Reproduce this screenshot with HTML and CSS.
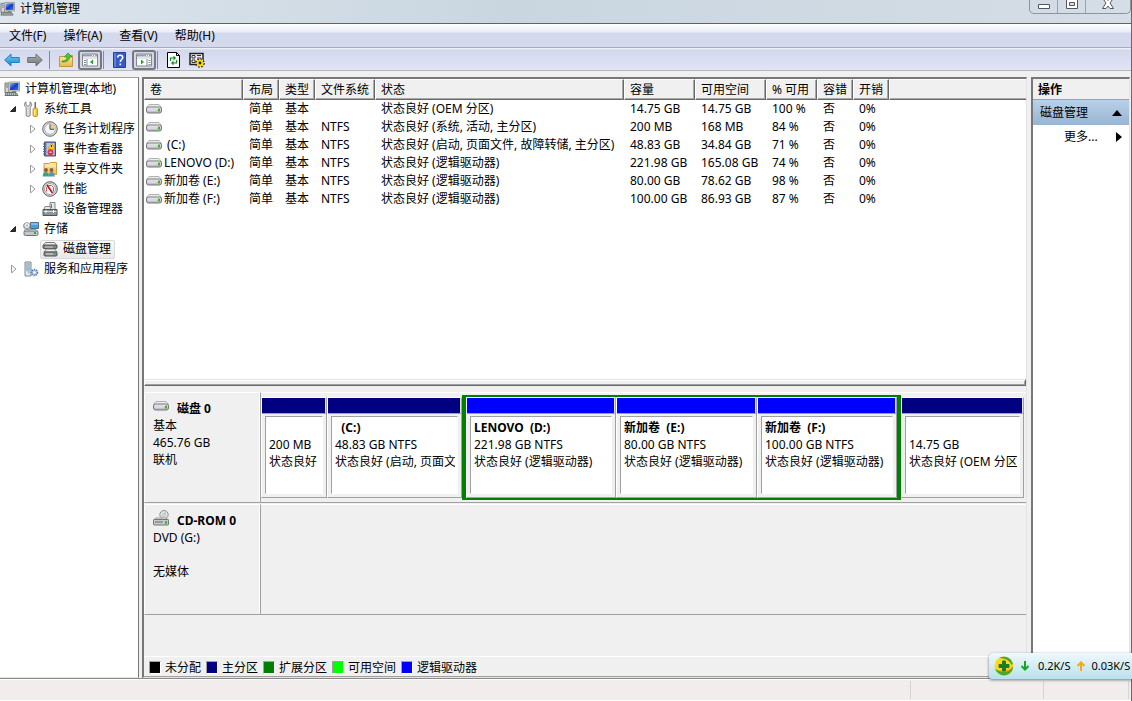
FILE: index.html
```html
<!DOCTYPE html>
<html lang="zh-CN">
<head>
<meta charset="utf-8">
<title>计算机管理</title>
<link rel="stylesheet" href="styles.css">
</head>
<body>
<svg class="defs" aria-hidden="true">
  <defs>
    <linearGradient id="gBlue" x2="0" y2="1"><stop offset="0" stop-color="#6fd0f8"/><stop offset="1" stop-color="#1583cf"/></linearGradient>
    <linearGradient id="gGray" x2="0" y2="1"><stop offset="0" stop-color="#b5b5b5"/><stop offset="1" stop-color="#6f6f6f"/></linearGradient>
    <linearGradient id="gMetal" x2="0" y2="1"><stop offset="0" stop-color="#f4f4f4"/><stop offset="1" stop-color="#b0b0b6"/></linearGradient>
    <linearGradient id="gFolder" x2="0" y2="1"><stop offset="0" stop-color="#fdeaa8"/><stop offset="1" stop-color="#e8b94e"/></linearGradient>
    <linearGradient id="gScreen" x2="1" y2="1"><stop offset="0" stop-color="#8fb7f7"/><stop offset=".5" stop-color="#1c37c4"/><stop offset="1" stop-color="#2d7ae8"/></linearGradient>
    <symbol id="computer" viewBox="0 0 16 16">
      <path d="M1 2h4v10H1z" fill="#d5d5d5" stroke="#777"/><path d="M2 4h2M2 6h2" stroke="#777"/>
      <path d="M5 1h10.500v9H5z" fill="#e4e4e4" stroke="#9c9c9c"/><path d="M6 2h8.500v7H6z" fill="url(#gScreen)"/>
      <path d="M8 10h4v2H8z" fill="#888"/><path d="M2 11.500h10l2 3H1z" fill="#b8bfc2" stroke="#6a7074"/><path d="M3 13h9" stroke="#555" stroke-dasharray="1 1"/>
    </symbol>
    <symbol id="drive" viewBox="0 0 16 16">
      <path d="M3 3.500h10l2.500 3H.5z" fill="#ececee" stroke="#b0b0b4"/>
      <rect x=".5" y="6" width="15" height="6" rx="2" fill="url(#gMetal)" stroke="#77777b"/>
      <path d="M2 8h8M2 9.500h8" stroke="#d9d9e8"/><path d="M12 7.500h2v3h-2z" fill="#3fb51f"/>
    </symbol>
    <symbol id="tools" viewBox="0 0 16 16">
      <path d="M3 .8v3l2 1.500 2-1.500v-3c2 1 2.300 4 .2 5.500V14c0 2-4 2-4 0V6.500C.8 5 1 2 3 .8z" fill="#dedede" stroke="#777" stroke-width=".9"/>
      <path d="M11.500 1h1.500v7h-1.500z" fill="#6c6c6c"/><rect x="10" y="7" width="4.500" height="8.500" rx="1.500" fill="#ffc928" stroke="#b98400" stroke-width=".8"/><path d="M11.500 9v5" stroke="#fff2a3"/>
    </symbol>
    <symbol id="clock" viewBox="0 0 16 16">
      <circle cx="8" cy="8" r="7.300" fill="#d4d4d4" stroke="#707070"/><circle cx="8" cy="8" r="5.300" fill="#f3f8ff" stroke="#aaa" stroke-width=".8"/>
      <path d="M8 3a5 5 0 0 1 5 5H8z" fill="#f1c988"/><path d="M8 3.500V8.300h4" fill="none" stroke="#3c4d60"/>
    </symbol>
    <symbol id="events" viewBox="0 0 16 16">
      <path d="M2.500 1h11v14h-11z" fill="#6f84b4" stroke="#3d5280"/><path d="M4.500 2h8v12h-8z" fill="#b9c9e2"/><path d="M1 3h3M1 5.500h3M1 8h3M1 10.500h3M1 13h3" stroke="#666"/>
      <path d="M9.500 2l3.700 6H6z" fill="#ffd02e" stroke="#a98100" stroke-width=".5"/><path d="M9.500 4v2" stroke="#222"/><circle cx="8.500" cy="11.200" r="2.900" fill="#d8343d"/><path d="M7.200 11.200h2.600" stroke="#fff"/>
    </symbol>
    <symbol id="shared" viewBox="0 0 16 16">
      <path d="M2 2.500h5l1-1h6.500v12H2z" fill="url(#gFolder)" stroke="#cba342"/><path d="M3 5h11" stroke="#fff2bf"/>
      <circle cx="4" cy="9" r="1.900" fill="#8a5b38"/><circle cx="9.500" cy="9" r="1.900" fill="#8a5b38"/>
      <path d="M.7 15.500c0-6 6.200-6 6.200 0z" fill="#32a584"/><path d="M6.500 15.500c0-6 6.200-6 6.200 0z" fill="#4e92ca"/>
    </symbol>
    <symbol id="gauge" viewBox="0 0 16 16">
      <circle cx="8" cy="8" r="7.300" fill="#d6d6d6" stroke="#606060"/><circle cx="8" cy="8" r="5.400" fill="#fff" stroke="#888" stroke-width=".7"/>
      <path d="M4.500 10.500V6.500l2-2h3l2 2v4" fill="none" stroke="#c95a5e"/><path d="M5 4l5.500 8" stroke="#d20f16" stroke-width="1.800"/>
    </symbol>
    <symbol id="devices" viewBox="0 0 16 16">
      <path d="M8 1.500h5v7H8z" fill="#e6e9ea" stroke="#808688"/><path d="M9.500 3v4" stroke="#3ea144"/><path d="M3 5.500h5l1 3H2z" fill="#e8e8e8" stroke="#888"/>
      <path d="M1 8.500h14v6H1z" fill="#8c9499" stroke="#4d565b"/><path d="M1.500 10.500h13" stroke="#d4d9dc"/><path d="M4 9v3M11.500 9v3" stroke="#fff"/>
    </symbol>
    <symbol id="storage" viewBox="0 0 16 16">
      <path d="M1 3h5l1 4H1z" fill="#ddd" stroke="#777"/><path d="M7.500 1.500h8v6h-8z" fill="#3aa4e5" stroke="#547086"/><path d="M8 3h7" stroke="#a9e1ff"/>
      <circle cx="4" cy="4.500" r="3" fill="#eceef0" stroke="#888" stroke-width=".7"/><circle cx="4" cy="4.500" r="1" fill="#aaa"/><path d="M2 8.500h11l2 2H1z" fill="#f4f4f4" stroke="#999"/><rect x="1" y="10" width="14" height="4.500" rx="1.500" fill="#c3c7cb" stroke="#6d7176"/><path d="M11 12h2" stroke="#29b823" stroke-width="2"/>
    </symbol>
    <symbol id="disks" viewBox="0 0 16 16">
      <path d="M3.500 1.500h9l2.500 3H1z" fill="#ededed" stroke="#777"/><rect x="1" y="4" width="14" height="3.500" rx="1" fill="#777d82" stroke="#555"/>
      <path d="M4.500 8h8l2.500 3H2z" fill="#f1f1f1" stroke="#777"/><rect x="2" y="11" width="13" height="4" rx="1" fill="#8b9094" stroke="#4d5256"/><path d="M4 13h7M3 6h8" stroke="#dadada"/><path d="M12 6h2M12 13h2" stroke="#31c63a"/>
    </symbol>
    <symbol id="services" viewBox="0 0 16 16">
      <path d="M2 1h6v14H2z" fill="#dfe7ec" stroke="#7c8b95"/><path d="M3 3h4M3 5h4M3 7h4M3 9h2" stroke="#6f91a9"/>
      <circle cx="7" cy="10" r="2" fill="#aecbe5" stroke="#648db0" stroke-dasharray="1 1"/><circle cx="11.500" cy="11.500" r="3" fill="#a5c3df" stroke="#54789b" stroke-width="1.500" stroke-dasharray="1.200 1"/><circle cx="11.500" cy="11.500" r="1.200" fill="#fff"/>
    </symbol>
    <symbol id="cdrom" viewBox="0 0 16 16">
      <circle cx="11" cy="4.700" r="4.200" fill="#e0e0e4" stroke="#929298"/><path d="M11 5l2-3.500M11 5l-2 3" stroke="#a6cba6"/><circle cx="11" cy="5" r="1.300" fill="#fff" stroke="#999" stroke-width=".6"/>
      <path d="M3 8h10l2.500 2H.5z" fill="#eee" stroke="#999"/><rect x=".5" y="9.500" width="15" height="5.500" rx="1" fill="#c9cacc" stroke="#737579"/><path d="M2 12h8" stroke="#66686b"/><path d="M12 12.500h2" stroke="#32bd23" stroke-width="3"/>
    </symbol>
    <symbol id="open" viewBox="0 0 8 8"><path d="M6.500 1.500v5h-5z" fill="#333" stroke="#222"/></symbol>
    <symbol id="closed" viewBox="0 0 8 8"><path d="M2.500 0l4.500 4-4.500 4z" fill="#fff" stroke="#9a9a9a"/></symbol>
    <symbol id="panel" viewBox="0 0 18 16">
      <path d="M1.500 2h15v12h-15z" fill="#fff" stroke="#808894"/><path d="M2 3.500h14" stroke="#8e9cb4" stroke-width="2"/><path d="M11 3.500h1M13 3.500h1" stroke="#fff"/><path d="M2 6h14" stroke="#c5cad3"/>
    </symbol>
  </defs>
</svg>
<div class="window">
  <header class="titlebar">
    <div class="caption"><svg class="icon"><use href="#computer"/></svg><span>计算机管理</span></div>
    <div class="controls">
      <button class="control" aria-label="最小化"><svg width="14" height="12" viewBox="0 0 14 12"><path d="M1.500 4.500h11v4h-11z" fill="#fff" stroke="#535666"/></svg></button>
      <button class="control" aria-label="最大化"><svg width="14" height="12" viewBox="0 0 14 12"><path d="M1.500-3h11V8.500h-11z" fill="#fff" stroke="#535666"/><path d="M4.500 2.500h5v3h-5z" fill="#d5dce8" stroke="#535666"/></svg></button>
      <button class="control close" aria-label="关闭"><svg width="14" height="12" viewBox="0 0 14 12"><path d="M1.500-2h3.500l2 2.500L9-2h3.500L9 3l3.500 5.500H9L7 6 5 8.500H1.500L5 3z" fill="#fff" stroke="#535666"/></svg></button>
    </div>
  </header>
  <nav class="menubar">
    <button>文件(F)</button><button>操作(A)</button><button>查看(V)</button><button>帮助(H)</button>
  </nav>
  <div class="toolbar">
    <button class="tool" aria-label="后退"><svg class="icon" viewBox="0 0 16 16"><path d="M.7 8L7 2v3.500h8.300v5H7V14z" fill="url(#gBlue)" stroke="#2a7fc0"/></svg></button>
    <button class="tool" aria-label="前进"><svg class="icon" viewBox="0 0 16 16"><path d="M15.300 8L9 2v3.500H.7v5H9V14z" fill="url(#gGray)" stroke="#6f7377"/></svg></button>
    <span class="separator"></span>
    <button class="tool" aria-label="上一级"><svg class="icon" viewBox="0 0 16 16"><path d="M1.500 4.500h5l1-1h7v11h-13z" fill="url(#gFolder)" stroke="#c49640"/><path d="M4 9c4 0 5-2 5-4H6.500L10 1l4 4h-2.500c0 4-3 5-7.500 5z" fill="#55c431" stroke="#2b8e1a" stroke-width=".7"/></svg></button>
    <button class="tool pressed" aria-label="显示控制台树" aria-pressed="true"><svg width="18" height="16"><use href="#panel"/><path d="M6 7v7M3 8.500h2M3 10.500h2M3 12.500h2" stroke="#7889a4"/><path d="M12 7.500v5L9 10z" fill="#24a423"/></svg></button>
    <span class="separator"></span>
    <button class="tool" aria-label="帮助"><svg class="icon" viewBox="0 0 16 16"><path d="M1.500.5h12v15h-12z" fill="#365bc4" stroke="#2340a0"/><path d="M3 1v14" stroke="#88a6ef"/><path d="M5.700 5.500c0-3 5-3 5 0 0 2-2.400 2-2.400 4.500M8.300 11.500v1.700" fill="none" stroke="#fff" stroke-width="1.600"/></svg></button>
    <button class="tool pressed" aria-label="显示操作窗格" aria-pressed="true"><svg width="18" height="16"><use href="#panel"/><path d="M12 7v7M13.500 8.500h2M13.500 10.500h2M13.500 12.500h2" stroke="#7889a4"/><path d="M6 7.500v5l3-2.500z" fill="#24a423"/></svg></button>
    <span class="separator"></span>
    <button class="tool" aria-label="刷新"><svg class="icon" viewBox="0 0 16 16"><path d="M1.500.5h9l3 3v12h-12z" fill="#fff" stroke="#000"/><path d="M10.500.5v3h3" fill="none" stroke="#000"/><path d="M4.500 9V6h4" fill="none" stroke="#118b22" stroke-width="1.200"/><path d="M7.500 3.500v5L10 6z" fill="#118b22"/><path d="M10.500 8v3h-4" fill="none" stroke="#118b22" stroke-width="1.200"/><path d="M7.500 8.500v5L5 11z" fill="#118b22"/></svg></button>
    <button class="tool" aria-label="属性"><svg class="icon" viewBox="0 0 16 16"><path d="M1 1.500h13v11H1z" fill="#eee" stroke="#222" stroke-width="1.500"/><path d="M3 3.500h3v2.500H3zM3 8h3v2.500H3z" fill="#fff" stroke="#333"/><path d="M8 3.500h4M8 6h4" stroke="#333"/><circle cx="11" cy="11" r="4" fill="#f4dc19" stroke="#222" stroke-width="1.500" stroke-dasharray="1.700 1.400"/><path d="M11 7v8M7 11h8M8 8l6 6M14 8l-6 6" stroke="#f4dc19" stroke-width="1.200"/><circle cx="11" cy="11" r="1.400" fill="#222"/></svg></button>
  </div>
  <main class="workspace">
    <ul class="tree">
      <li class="node root"><svg class="icon"><use href="#computer"/></svg><span class="label">计算机管理(本地)</span></li>
      <li class="node"><svg class="twist"><use href="#open"/></svg><svg class="icon"><use href="#tools"/></svg><span class="label">系统工具</span></li>
      <li class="node child"><svg class="twist"><use href="#closed"/></svg><svg class="icon"><use href="#clock"/></svg><span class="label">任务计划程序</span></li>
      <li class="node child"><svg class="twist"><use href="#closed"/></svg><svg class="icon"><use href="#events"/></svg><span class="label">事件查看器</span></li>
      <li class="node child"><svg class="twist"><use href="#closed"/></svg><svg class="icon"><use href="#shared"/></svg><span class="label">共享文件夹</span></li>
      <li class="node child"><svg class="twist"><use href="#closed"/></svg><svg class="icon"><use href="#gauge"/></svg><span class="label">性能</span></li>
      <li class="node child"><span class="twist"></span><svg class="icon"><use href="#devices"/></svg><span class="label">设备管理器</span></li>
      <li class="node"><svg class="twist"><use href="#open"/></svg><svg class="icon"><use href="#storage"/></svg><span class="label">存储</span></li>
      <li class="node child"><span class="twist"></span><span class="selected"><svg class="icon"><use href="#disks"/></svg><span class="label">磁盘管理</span></span></li>
      <li class="node"><svg class="twist"><use href="#closed"/></svg><svg class="icon"><use href="#services"/></svg><span class="label">服务和应用程序</span></li>
    </ul>
    <section class="center">
      <div class="list">
        <table class="volumes">
          <colgroup><col class="c-name"><col class="c-short"><col class="c-short"><col class="c-fs"><col class="c-state"><col class="c-size"><col class="c-size"><col class="c-free"><col class="c-short"><col class="c-short"><col></colgroup>
          <thead><tr><th>卷</th><th>布局</th><th>类型</th><th>文件系统</th><th>状态</th><th>容量</th><th>可用空间</th><th>% 可用</th><th>容错</th><th>开销</th><th class="rest"></th></tr></thead>
          <tbody>
            <tr><td><span class="volume"><svg class="icon"><use href="#drive"/></svg></span></td><td>简单</td><td>基本</td><td></td><td>状态良好 (OEM 分区)</td><td>14.75 GB</td><td>14.75 GB</td><td>100 %</td><td>否</td><td>0%</td><td></td></tr>
            <tr><td><span class="volume"><svg class="icon"><use href="#drive"/></svg></span></td><td>简单</td><td>基本</td><td>NTFS</td><td>状态良好 (系统, 活动, 主分区)</td><td>200 MB</td><td>168 MB</td><td>84 %</td><td>否</td><td>0%</td><td></td></tr>
            <tr><td><span class="volume"><svg class="icon"><use href="#drive"/></svg>&nbsp;(C:)</span></td><td>简单</td><td>基本</td><td>NTFS</td><td>状态良好 (启动, 页面文件, 故障转储, 主分区)</td><td>48.83 GB</td><td>34.84 GB</td><td>71 %</td><td>否</td><td>0%</td><td></td></tr>
            <tr><td><span class="volume"><svg class="icon"><use href="#drive"/></svg>LENOVO (D:)</span></td><td>简单</td><td>基本</td><td>NTFS</td><td>状态良好 (逻辑驱动器)</td><td>221.98 GB</td><td>165.08 GB</td><td>74 %</td><td>否</td><td>0%</td><td></td></tr>
            <tr><td><span class="volume"><svg class="icon"><use href="#drive"/></svg>新加卷 (E:)</span></td><td>简单</td><td>基本</td><td>NTFS</td><td>状态良好 (逻辑驱动器)</td><td>80.00 GB</td><td>78.62 GB</td><td>98 %</td><td>否</td><td>0%</td><td></td></tr>
            <tr><td><span class="volume"><svg class="icon"><use href="#drive"/></svg>新加卷 (F:)</span></td><td>简单</td><td>基本</td><td>NTFS</td><td>状态良好 (逻辑驱动器)</td><td>100.00 GB</td><td>86.93 GB</td><td>87 %</td><td>否</td><td>0%</td><td></td></tr>
          </tbody>
        </table>
      </div>
      <div class="splitter"></div>
      <div class="disks">
        <div class="disk">
          <div class="disk-info"><h2><svg class="icon"><use href="#drive"/></svg>磁盘 0</h2><p>基本</p><p>465.76 GB</p><p>联机</p></div>
          <div class="partitions">
            <div class="part"><div class="bar"></div><div class="box"><b></b><p>200 MB</p><p>状态良好</p></div></div>
            <div class="part"><div class="bar"></div><div class="box"><b>&nbsp; (C:)</b><p>48.83 GB NTFS</p><p>状态良好 (启动, 页面文件</p></div></div>
            <div class="extended">
              <div class="part logical"><div class="bar"></div><div class="box"><b>LENOVO &nbsp;(D:)</b><p>221.98 GB NTFS</p><p>状态良好 (逻辑驱动器)</p></div></div>
              <div class="part logical"><div class="bar"></div><div class="box"><b>新加卷 &nbsp;(E:)</b><p>80.00 GB NTFS</p><p>状态良好 (逻辑驱动器)</p></div></div>
              <div class="part logical"><div class="bar"></div><div class="box"><b>新加卷 &nbsp;(F:)</b><p>100.00 GB NTFS</p><p>状态良好 (逻辑驱动器)</p></div></div>
            </div>
            <div class="part"><div class="bar"></div><div class="box"><b></b><p>14.75 GB</p><p>状态良好 (OEM 分区)</p></div></div>
          </div>
        </div>
        <div class="disk">
          <div class="disk-info"><h2><svg class="icon"><use href="#cdrom"/></svg>CD-ROM 0</h2><p>DVD (G:)</p><p>&nbsp;</p><p>无媒体</p></div>
          <div class="partitions"></div>
        </div>
      </div>
      <ul class="legend">
        <li><i class="swatch free-raw"></i>未分配</li><li><i class="swatch primary"></i>主分区</li><li><i class="swatch ext"></i>扩展分区</li><li><i class="swatch avail"></i>可用空间</li><li><i class="swatch logic"></i>逻辑驱动器</li>
      </ul>
    </section>
    <aside class="actions">
      <h2 class="actions-title">操作</h2>
      <button class="action-group"><span>磁盘管理</span><svg width="10" height="6"><path d="M0 6l5-6 5 6z"/></svg></button>
      <button class="action-more"><span>更多...</span><svg width="6" height="10"><path d="M0 0l6 5-6 5z"/></svg></button>
    </aside>
  </main>
  <footer class="statusbar"><span class="status-main"></span><span class="status-mid"></span><span class="status-end"></span></footer>
  <div class="speed">
    <svg width="20" height="20" viewBox="0 0 20 20"><circle cx="10" cy="10" r="9.500" fill="#ffd91d"/><path d="M5 2C10-1 17 1 19 8c-1 1-2 1-2 0C15 4 10 2 5 2z" fill="#4da52d"/><path d="M1 13c3 6 9 8 14 5 3-2 4-5 4-8-3 5-8 8-18 3z" fill="#4da52d"/><path d="M3 13c5 2 10 2 15-2-1 4-8 7-15 2z" fill="#ffa914"/><path d="M8.500 5h3v3.500H15v3h-3.500V15h-3v-3.500H5v-3h3.500z" fill="#197d28" stroke="#197d28" stroke-linejoin="round"/></svg>
    <svg class="down" width="8" height="10"><path d="M4 0v9M.5 5L4 8.500 7.500 5" fill="none" stroke="#18a725" stroke-width="2"/></svg><span class="rate">0.2K/S</span>
    <svg class="up" width="8" height="10"><path d="M4 10V1M.5 5L4 1.500 7.500 5" fill="none" stroke="#f5a916" stroke-width="2"/></svg><span>0.03K/S</span>
  </div>
</div>
</body>
</html>
```
FILE: styles.css
```css
* { box-sizing: border-box; }
body { margin: 0; color: #000; font: 12px/18px "Noto Sans", "Noto Sans CJK SC", sans-serif; }
button { margin: 0; padding: 0; border: 0; background: none; color: inherit; font: inherit; }
h2, p, ul { margin: 0; padding: 0; }
h2 { font-size: 12px; line-height: 17px; }
ul { list-style: none; }
svg { display: block; flex: none; }
.defs { position: absolute; width: 0; height: 0; }
.icon { width: 16px; height: 16px; }

.window { position: relative; display: flex; flex-direction: column; min-height: 100vh; background: #f0f0f0; border-right: 1px solid #696969; }

.titlebar { display: flex; justify-content: space-between; height: 24px; background: linear-gradient(90deg, #dde5ed, #c9d6e0 45%, #d5dde6); border-bottom: 1px solid #5f6368; }
.caption { display: flex; align-items: flex-start; gap: 5px; }
.caption .icon { margin-top: 1px; width: 15px; }
.controls { display: flex; height: 14px; border: 1px solid #8d949e; border-top: 0; border-radius: 0 0 5px 5px; }
.control { display: flex; justify-content: center; width: 28px; border-right: 1px solid #9aa2ac; }
.control.close { width: 44px; border-right: 0; }

.menubar { display: flex; gap: 17px; height: 24px; padding: 2px 9px 0; background: linear-gradient(#fff, #e9edf6 8px, #d4d9ed 9px, #d4d9ed); border-bottom: 1px solid #a9adba; }
.menubar button { height: 20px; }

.toolbar { display: flex; align-items: center; height: 23px; padding: 2px 0 0 4px; background: linear-gradient(#f7f8fc, #d3d8ec 2px, #e0e4f4); border-bottom: 1px solid #b4b6bd; }
.tool { display: flex; align-items: center; justify-content: center; height: 20px; margin-right: 7px; }
.tool.pressed { width: 24px; margin: 0 1px 0 -3px; background: #d5d8e0; border: 2px solid #747983; border-radius: 3px; }
.separator { width: 1px; height: 18px; margin-right: 8px; background: #868b98; }
.tool + .separator { margin-left: -1px; }
.pressed + .separator { margin-left: 0; margin-right: 8px; }

.workspace { flex: 1; display: grid; grid-template-columns: 139px minmax(0, 1fr) 99px; gap: 3px; padding: 6px 1px 0 0; border-bottom: 1px solid #8b8b8b; }

.tree { padding-top: 1px; background: #fff; border-top: 1px solid #a0a0a0; border-right: 1px solid #777; border-bottom: 1px solid #e3e3e3; }
.node { display: flex; align-items: center; height: 20px; padding-left: 9px; white-space: nowrap; }
.node.root { padding-left: 4px; }
.node.child { padding-left: 28px; }
.node .icon { margin-right: 5px; }
.twist { width: 8px; height: 8px; margin-right: 6px; }
.selected { display: flex; align-items: center; height: 19px; margin-left: -2px; padding: 0 3px 0 1px; background: linear-gradient(#fafafa, #e8e8e8); border: 1px solid #d9d9d9; border-radius: 2px; }

.center { display: flex; flex-direction: column; border: 1px solid #e3e3e3; border-top: 2px solid #777; border-left: 2px solid #777; margin-right: 1px; }
.list { flex: 1; min-height: 200px; background: #fff; }
.volumes { width: 100%; table-layout: fixed; border-collapse: separate; border-spacing: 0; }
.c-name { width: 99px; }
.c-short { width: 36px; }
.c-fs { width: 60px; }
.c-state { width: 249px; }
.c-size { width: 71px; }
.c-free { width: 51px; }
.volumes th { height: 21px; padding: 0 0 0 5px; background: #f0f0f0; border: 1px solid; border-color: #fff #696969 #696969 #fff; box-shadow: inset -1px -1px #a9a9a9; font-weight: 400; text-align: left; white-space: nowrap; }
.volumes th.rest { border-right: 0; box-shadow: inset 0 -1px #a9a9a9; }
.volumes td { height: 18px; padding: 0 0 0 6px; white-space: nowrap; }
.volumes td:first-child { padding-left: 2px; }
.volume { display: flex; align-items: center; gap: 2px; }

.splitter { height: 7px; background: #f0f0f0; border: 1px solid; border-color: #e3e3e3 #696969 #696969 #fff; box-shadow: inset 0 1px #fff, inset -1px -1px #a0a0a0; }
.disks { display: flex; flex-direction: column; gap: 1px; padding-top: 6px; min-height: 270px; }
.disk { display: grid; grid-template-columns: 117px minmax(0, 1fr); height: 111px; }
.disk-info { padding: 7px 0 0 8px; border: 1px solid #a0a0a0; border-top-color: #fff; border-left-color: #fff; border-right-color: #a0a0a0; box-shadow: inset -1px 0 #fff; line-height: 17px; }
.disk-info h2 { display: flex; align-items: center; gap: 8px; }
.disk-info .icon { margin-top: -6px; }
.partitions { display: grid; grid-template-columns: 66fr 135fr 439fr 123fr; gap: 0; padding: 3px 2px 1px 0; border-top: 1px solid #fff; border-bottom: 1px solid #a0a0a0; }
.part { display: flex; flex-direction: column; min-width: 0; height: 101px; margin-top: 1px; border: 1px solid; border-color: #fff #a0a0a0 #a0a0a0 #fff; }
.bar { height: 15px; background: #000080; border-right: 1px solid #e3e3e3; box-shadow: 0 1px #a0a0a0; }
.box { flex: 1; min-width: 0; margin: 3px; padding: 2px 2px 0 3px; background: #fff; border: 1px solid; border-color: #a0a0a0 #fff #fff #a0a0a0; line-height: 17px; white-space: nowrap; overflow: hidden; }
.box b { display: block; height: 17px; }
.box p { overflow: hidden; }
.extended { display: grid; grid-template-columns: 150fr 141fr 140fr; height: 105px; margin-top: -1px; border: solid #008000; border-width: 2px 4px; }
.extended .part { height: 101px; margin: 0; }
.logical .bar { background: #0000ff; }

.legend { display: flex; gap: 5px; height: 21px; padding: 2px 5px 0; border-top: 1px solid #fff; border-bottom: 1px solid #a0a0a0; }
.legend li { display: flex; align-items: center; gap: 4px; height: 17px; }
.swatch { width: 12px; height: 13px; border: 1px solid #a0a0a0; border-right-color: #fff; border-bottom-color: #fff; }
.free-raw { background: #000; }
.primary { background: #000080; }
.ext { background: #008000; }
.avail { background: #00ff00; }
.logic { background: #0000ff; }

.actions { display: flex; flex-direction: column; background: #fff; border: 1px solid #e3e3e3; border-top: 2px solid #777; border-left: 2px solid #777; }
.actions-title { height: 21px; padding: 2px 5px; background: #f0f0f0; border-bottom: 1px solid #a0a0a0; }
.action-group, .action-more { display: flex; align-items: center; justify-content: space-between; height: 25px; padding: 0 7px; }
.action-group { background: linear-gradient(#b9d1ea, #99b4d1); }
.action-more { height: 23px; padding-left: 31px; }

.statusbar { display: grid; grid-template-columns: minmax(0, 1fr) 133px 85px; height: 22px; padding: 1px 2px 1px 0; background: #f0edec; border-top: 1px solid #fff; border-bottom: 1px solid #fff; }
.statusbar span { border-right: 1px solid #d5d2d1; }

.speed { position: absolute; right: -1px; bottom: 22px; display: flex; align-items: center; width: 143px; height: 26px; padding-left: 5px; background: linear-gradient(#eff9fc, #b9e0ee); border-radius: 5px 0 0 3px; box-shadow: 0 1px 3px #0008; font-size: 11px; white-space: nowrap; }
.down { margin: 0 9px 0 7px; }
.rate { margin-right: 7px; }
.up { margin-right: 6px; }
```
